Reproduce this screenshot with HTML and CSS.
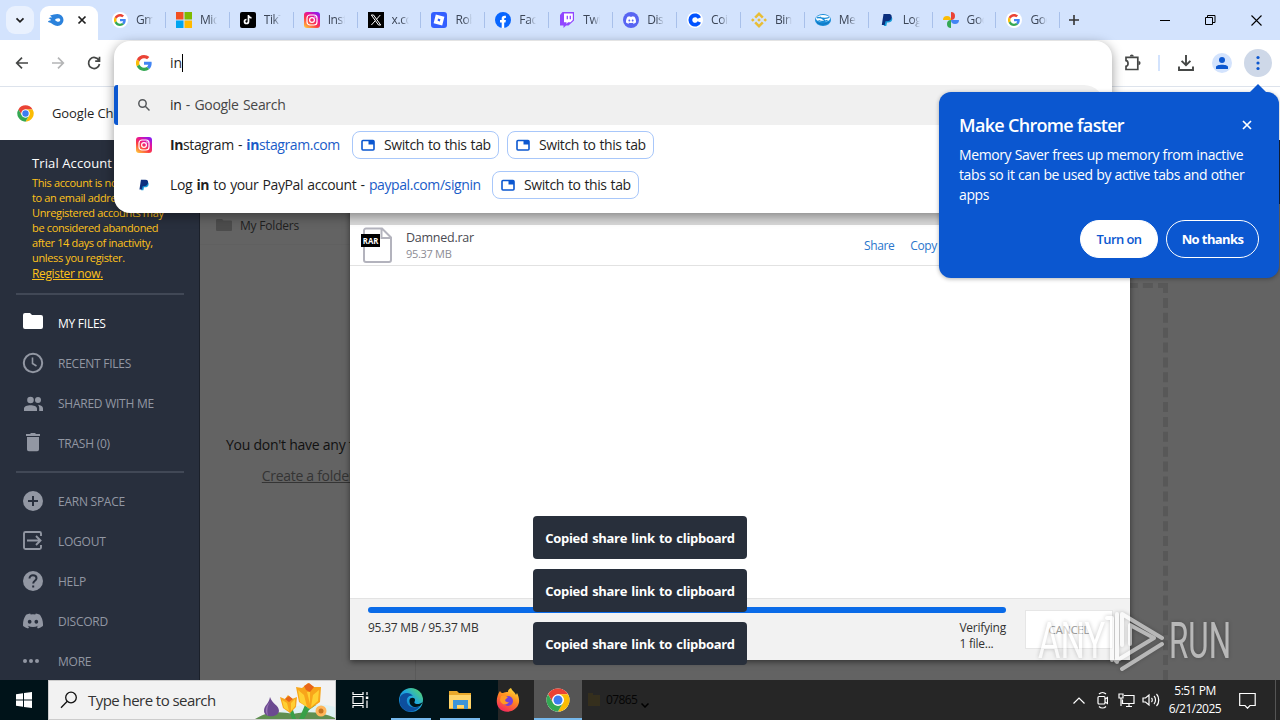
FILE: index.html
```
<!DOCTYPE html>
<html lang="en">
<head>
    <meta charset="UTF-8">
    <meta name="viewport" content="width=device-width, initial-scale=1.0">
    <title>My Files</title>
    <link rel="stylesheet" href="styles.css">
</head>
<body>
    <!-- shared icons -->
    <svg class="defs" width="0" height="0">
        <defs>
            <linearGradient id="igGrad" x1="0.1" y1="1" x2="0.8" y2="0">
                <stop offset="0" stop-color="#ffc83c"/>
                <stop offset="0.4" stop-color="#fb3a44"/>
                <stop offset="0.7" stop-color="#e311a0"/>
                <stop offset="1" stop-color="#8a1cf0"/>
            </linearGradient>
            <linearGradient id="edgeGrad" x1="0" y1="1" x2="1" y2="0">
                <stop offset="0" stop-color="#0b62b8"/>
                <stop offset="0.55" stop-color="#1ea7e0"/>
                <stop offset="1" stop-color="#62dc55"/>
            </linearGradient>
            <linearGradient id="foxGrad" x1="0.8" y1="0" x2="0.3" y2="1">
                <stop offset="0" stop-color="#ffe03a"/>
                <stop offset="0.45" stop-color="#ff8a1f"/>
                <stop offset="1" stop-color="#f5265e"/>
            </linearGradient>
        </defs>
        <symbol id="google" viewBox="0 0 48 48">
            <path fill="#ea4335" d="M24 9.500c3.500 0 6.700 1.200 9.200 3.600l6.900-6.900C35.900 2.400 30.500 0 24 0 14.600 0 6.500 5.400 2.600 13.200l8 6.200C12.400 13.700 17.700 9.500 24 9.500z"/>
            <path fill="#4285f4" d="M47 24.600c0-1.600-.2-3.100-.4-4.600H24v9h12.900c-.6 3-2.300 5.500-4.800 7.200l7.700 6C44.400 38 47 31.800 47 24.600z"/>
            <path fill="#fbbc05" d="M10.500 28.600a14.500 14.500 0 0 1 0-9.200l-8-6.200a24 24 0 0 0 0 21.600z"/>
            <path fill="#34a853" d="M24 48c6.500 0 11.900-2.100 15.900-5.800l-7.700-6c-2.200 1.400-4.900 2.300-8.200 2.300-6.300 0-11.600-4.200-13.500-9.900l-8 6.200C6.500 42.600 14.600 48 24 48z"/>
        </symbol>
        <symbol id="instagram" viewBox="0 0 16 16">
            <rect width="16" height="16" rx="3" fill="url(#igGrad)"/>
            <rect x="3" y="3" width="10" height="10" rx="3" fill="none" stroke="#fff" stroke-width="1.200"/>
            <circle cx="8" cy="8" r="2.400" fill="none" stroke="#fff" stroke-width="1.200"/>
            <circle cx="11" cy="5" r=".7" fill="#fff"/>
        </symbol>
        <symbol id="paypal" viewBox="0 0 16 16">
            <path fill="#179bd7" d="M5.500 5h7.300c1 1.500.7 5.500-3.600 5.500H8L7.300 14H4.800z"/>
            <path fill="#0b2f7e" d="M4.500 2h5c3 0 3.600 2 3 4-.6 2.300-2.300 3.300-4.500 3.300H6.500L5.700 13H2.800z"/>
        </symbol>
        <symbol id="chrome" viewBox="0 0 48 48">
            <circle cx="24" cy="24" r="23" fill="#fff"/>
            <path fill="#ea4335" d="M4.080 12.500A23 23 0 0 1 43.920 12.500H24A11.500 11.500 0 0 0 14 18.250z"/>
            <path fill="#ea4335" d="M4.080 12.500L14.040 29.750A11.500 11.500 0 0 1 24 12.500z"/>
            <path fill="#fbbc04" d="M43.920 12.500A23 23 0 0 1 24 47L33.960 29.750A11.500 11.500 0 0 0 24 12.500z"/>
            <path fill="#34a853" d="M24 47A23 23 0 0 1 4.080 12.500L14.040 29.750A11.500 11.500 0 0 0 33.960 29.750z"/>
            <circle cx="24" cy="24" r="11.500" fill="#fff"/>
            <circle cx="24" cy="24" r="9" fill="#3b7cf0"/>
        </symbol>
        <symbol id="switch" viewBox="0 0 14 12">
            <rect x="1" y="1.500" width="12" height="9.500" rx="1" fill="none" stroke="#0b57d0" stroke-width="1.600"/>
            <rect x="7.500" y="1.500" width="5.500" height="4" fill="#0b57d0"/>
        </symbol>
        <symbol id="discord" viewBox="0 0 24 24">
            <path fill="currentColor" fill-rule="evenodd" d="M20.300 4.400A19.800 19.800 0 0 0 15.400 2.900l-.7 1.300a18 18 0 0 0-5.500 0L8.600 2.900a19.700 19.700 0 0 0-4.900 1.500C.5 9-.3 13.600.1 18.100a20 20 0 0 0 6 3l1.300-2-1.900-1 .4-.3a14.300 14.300 0 0 0 12.200 0l.4.300-1.900.9 1.300 2.100a20 20 0 0 0 6-3c.5-5.200-.8-9.700-3.600-13.700zM8 15.300c-1.200 0-2.200-1-2.200-2.400s1-2.400 2.200-2.400 2.200 1 2.200 2.400-1 2.400-2.200 2.400zm8 0c-1.200 0-2.200-1-2.200-2.400s1-2.400 2.200-2.400 2.200 1 2.200 2.400-1 2.400-2.200 2.400z"/>
        </symbol>
    </svg>

    <div class="tabs">
        <button class="tab-search"><svg width="12" height="12" viewBox="0 0 12 12"><path d="M2.500 4.300L6 7.800l3.500-3.500" fill="none" stroke="#1f1f1f" stroke-width="1.700"/></svg></button>
        <div class="active-tab">
            <svg width="16" height="12" viewBox="0 0 16 12"><path fill="#2b82dc" fill-rule="evenodd" d="M2 1.500C5 1 6.500 0 9.500 0a6 6 0 0 1 0 12C6 12 4.500 9 0 8c0-1.200 1.500-1.500 3-1.700C2.700 5 1.500 4.500.5 4.200 2 3.500 3 3.500 4 3.300zM10.500 4.200C8.500 4.200 7.500 5 7 6c1 1.200 2 1.800 3.500 1.800a1.800 1.800 0 0 0 0-3.600z"/></svg>
            <svg width="10" height="10" viewBox="0 0 10 10"><path d="M1.500 1.500l7 7m0-7l-7 7" stroke="#1f1f1f" stroke-width="1.700"/></svg>
        </div>
        <div class="tab"><span class="disc"><svg width="12" height="12"><use href="#google"/></svg></span><span class="title">Gmail</span></div>
        <div class="tab"><svg width="16" height="16" viewBox="0 0 16 16"><path fill="#f25022" d="M0 0h7.500v7.500H0z"/><path fill="#7fba00" d="M8.500 0H16v7.500H8.500z"/><path fill="#00a4ef" d="M0 8.500h7.500V16H0z"/><path fill="#ffb900" d="M8.500 8.500H16V16H8.500z"/></svg><span class="title">Microsoft</span></div>
        <div class="tab"><svg width="16" height="16" viewBox="0 0 16 16"><rect width="16" height="16" rx="2"/><path d="M8.500 3v6.500a2 2 0 1 1-2-2M8.500 3c.2 1.700 1.300 2.700 3 2.800" fill="none" stroke="#fff" stroke-width="1.700"/></svg><span class="title">TikTok</span></div>
        <div class="tab"><svg width="16" height="16"><use href="#instagram"/></svg><span class="title">Instagram</span></div>
        <div class="tab"><svg width="16" height="16" viewBox="0 0 16 16"><rect width="16" height="16"/><path d="M3.300 3h2.200l7.200 10h-2.200zM12.300 3l-4 4.500M7.200 8.800L3.400 13" fill="none" stroke="#fff"/></svg><span class="title">x.com</span></div>
        <div class="tab"><svg width="16" height="16" viewBox="0 0 16 16"><rect width="16" height="16" rx="3" fill="#335fff"/><path fill="#fff" fill-rule="evenodd" d="M4.800 2.600l8.600 2.200-2.200 8.600-8.600-2.200zM7 6.600l-.4 2.200 2.200.6.600-2.200z"/></svg><span class="title">Roblox</span></div>
        <div class="tab"><svg width="16" height="16" viewBox="0 0 16 16"><circle cx="8" cy="8" r="8" fill="#0866ff"/><path fill="#fff" d="M6.700 16v-5.500H5V8h1.700V6.500c0-2.300 1.400-3.200 4.200-2.700v2.100C9.400 5.800 9.200 6.200 9.200 7v1h1.700l-.4 2.500H9.200V16z"/></svg><span class="title">Facebook</span></div>
        <div class="tab"><svg width="16" height="16" viewBox="0 0 16 16"><path fill="#9146ff" d="M3.500 0L1 3v10.500h3.500V16L7 13.500h2.500L15 8.500V0z"/><path fill="#fff" d="M5 1.500h8.800V8l-2.300 2.300H9L7.500 12v-1.700H5z"/><path d="M8.300 3.700v3.600M11.300 3.700v3.600" stroke="#9146ff" stroke-width="1.300"/></svg><span class="title">Twitch</span></div>
        <div class="tab"><span class="disc discord-disc"><svg width="10" height="10"><use href="#discord"/></svg></span><span class="title">Discord</span></div>
        <div class="tab"><svg width="16" height="16" viewBox="0 0 16 16"><circle cx="8" cy="8" r="8" fill="#fff"/><path d="M12.300 6A4.700 4.700 0 1 0 12.300 10" fill="none" stroke="#0052ff" stroke-width="3.800"/></svg><span class="title">Coinbase</span></div>
        <div class="tab"><svg width="16" height="16" viewBox="0 0 16 16" fill="#e8bd35"><path d="M8 0l4.700 4.700-1.800 1.800L8 3.600 5.100 6.500 3.300 4.700zM8 16l4.700-4.700-1.800-1.800L8 12.400 5.100 9.500l-1.800 1.800zM1.800 6.200L3.600 8 1.800 9.800 0 8zM14.200 6.200L16 8l-1.800 1.800L12.400 8zM8 6.200L9.800 8 8 9.800 6.200 8z"/></svg><span class="title">Binance</span></div>
        <div class="tab"><svg width="16" height="16" viewBox="0 0 16 16"><ellipse cx="8" cy="8" rx="8" ry="6" fill="#168bd8"/><ellipse cx="8" cy="6.500" rx="7" ry="3.600" fill="#fff"/><path d="M2 6c3-2 5 2.200 12-.5M3.500 8.500c3 1.200 6 1.700 9-.2M5 5l5 3.500" fill="none" stroke="#168bd8" stroke-width="1.300"/><path d="M2 10.500c4 2.500 8 2 12-.5" fill="none" stroke="#0d6cb5" stroke-width=".8"/></svg><span class="title">Mercado</span></div>
        <div class="tab"><svg width="16" height="16"><use href="#paypal"/></svg><span class="title">Log in</span></div>
        <div class="tab"><svg width="16" height="16" viewBox="0 0 16 16"><path fill="#ea4335" d="M8 0a4 4 0 0 1 0 8z"/><path fill="#4285f4" d="M16 8a4 4 0 0 1-8 0z"/><path fill="#34a853" d="M8 16a4 4 0 0 1 0-8z"/><path fill="#fbbc04" d="M0 8a4 4 0 0 1 8 0z"/></svg><span class="title">Google Photos</span></div>
        <div class="tab"><span class="disc"><svg width="12" height="12"><use href="#google"/></svg></span><span class="title">Google</span></div>
        <svg class="new-tab" width="12" height="12" viewBox="0 0 12 12"><path d="M6 1v10M1 6h10" stroke="#333" stroke-width="1.600"/></svg>
        <div class="window-buttons">
            <svg width="10" height="10" viewBox="0 0 10 10"><path d="M0 5.500h10" stroke="#000"/></svg>
            <svg width="11" height="11" viewBox="0 0 11 11" fill="none" stroke="#000"><path d="M.5 2.500h7v7h-7zM2.500 2.500v-2h7.500v7H7.500"/></svg>
            <svg width="11" height="11" viewBox="0 0 11 11"><path d="M.5.500l10 10m0-10l-10 10" stroke="#000" stroke-width="1.100"/></svg>
        </div>
    </div>

    <div class="toolbar">
        <div class="nav">
            <svg width="16" height="16" viewBox="0 0 16 16" fill="none" stroke="#454746" stroke-width="1.700"><path d="M14 8H3M8 2.700L2.700 8 8 13.300"/></svg>
            <svg width="16" height="16" viewBox="0 0 16 16" fill="none" stroke="#b4b5b6" stroke-width="1.700"><path d="M2 8h11M8 2.700L13.300 8 8 13.300"/></svg>
            <svg width="16" height="16" viewBox="0 0 16 16" fill="none" stroke="#454746" stroke-width="1.700"><path d="M13 5.500A5.500 5.500 0 1 0 13.500 9M13.500 1.800v4.400H9.200"/></svg>
        </div>
        <div class="actions">
            <svg width="18" height="18" viewBox="0 0 18 18" fill="none" stroke="#454746" stroke-width="1.700"><path d="M3 3.300h11.800v12.200H3v-3.200c2.700-.3 2.700-5.400 0-5.700z"/><path fill="#454746" stroke="none" d="M6.800 2.600a2 2 0 0 1 4 0zM15.500 7a2 2 0 0 1 0 4.200z"/></svg>
            <span class="separator"></span>
            <svg width="18" height="18" viewBox="0 0 18 18" fill="none" stroke="#454746" stroke-width="1.900"><path d="M9 1v10M4.600 6.800L9 11.200l4.400-4.400M2 12.500V16h14v-3.500"/></svg>
            <span class="avatar"><svg width="14" height="14" viewBox="0 0 14 14" fill="#0b57d0"><circle cx="7" cy="4" r="3"/><path d="M1 13v-2c0-3 12-3 12 0v2z"/></svg></span>
            <span class="kebab"><svg width="4" height="16" viewBox="0 0 4 16" fill="#0b57d0"><circle cx="2" cy="2.500" r="1.600"/><circle cx="2" cy="8" r="1.600"/><circle cx="2" cy="13.500" r="1.600"/></svg></span>
        </div>
    </div>

    <div class="infobar">
        <svg width="17" height="17"><use href="#chrome"/></svg>
        <span>Google Chrome</span>
    </div>

    <div class="page">
        <div class="sidebar">
            <div class="account">
                <h3>Trial Account</h3>
                <p>This account is not linked<br>to an email address.<br>Unregistered accounts may<br>be considered abandoned<br>after 14 days of inactivity,<br>unless you register.</p>
                <a>Register now.</a>
            </div>
            <ul class="menu">
                <li class="selected"><svg width="22" height="22" viewBox="0 0 22 22"><path d="M3 1h5l2 2h9a2 2 0 0 1 2 2v10a2 2 0 0 1-2 2H3a2 2 0 0 1-2-2V3a2 2 0 0 1 2-2z"/></svg>MY FILES</li>
                <li><svg width="22" height="22" viewBox="0 0 22 22"><g fill="none" stroke="currentColor" stroke-width="2"><circle cx="11" cy="11" r="9.200"/><path d="M10.500 5.500v6l4 2.500" stroke-width="1.600"/></g></svg>RECENT FILES</li>
                <li><svg width="22" height="22" viewBox="0 0 22 22"><circle cx="8.500" cy="8" r="3.300"/><circle cx="16" cy="8" r="3"/><path d="M2 19v-2.500c0-4.500 13-4.500 13 0V19zM16 12.700c3 .3 5 1.500 5 3.800V19h-3.800v-3c0-1.400-.5-2.400-1.200-3.300z"/></svg>SHARED WITH ME</li>
                <li><svg width="22" height="22" viewBox="0 0 22 22"><path d="M4 2h4l1-1h4l1 1h4v2H4zM5 5h12v12.500a1.800 1.800 0 0 1-1.800 1.800H6.800A1.800 1.800 0 0 1 5 17.500z"/></svg>TRASH (0)</li>
            </ul>
            <ul class="menu more">
                <li><svg width="22" height="22" viewBox="0 0 22 22"><circle cx="11" cy="11" r="10"/><path d="M11 6v10M6 11h10" stroke="#282f3d" stroke-width="2"/></svg>EARN SPACE</li>
                <li><svg width="22" height="22" viewBox="0 0 22 22"><g fill="none" stroke="currentColor" stroke-width="1.900"><path d="M19 6V3.500A1.500 1.500 0 0 0 17.500 2h-14A1.500 1.500 0 0 0 2 3.500v14A1.500 1.500 0 0 0 3.500 19h14a1.500 1.500 0 0 0 1.500-1.500V15M5 10.500h13M14 6l4.500 4.500L14 15"/></g></svg>LOGOUT</li>
                <li><svg width="22" height="22" viewBox="0 0 22 22"><circle cx="11" cy="11" r="10"/><path d="M7.500 8.500c0-4.500 7-4 7-.3 0 2.600-3.300 2.600-3.300 5.300M11.200 15.500v2" fill="none" stroke="#282f3d" stroke-width="2"/></svg>HELP</li>
                <li><svg width="20" height="20" class="discord"><use href="#discord"/></svg>DISCORD</li>
                <li><svg width="22" height="22" viewBox="0 0 22 22"><circle cx="3" cy="11" r="2"/><circle cx="9" cy="11" r="2"/><circle cx="15" cy="11" r="2"/></svg>MORE</li>
            </ul>
        </div>
        <div class="folders">
            <div class="folder-row"><svg width="16" height="12" viewBox="0 0 16 12"><path fill="#4c4c4c" d="M1 0h5l1.500 1.500H15a1 1 0 0 1 1 1V11a1 1 0 0 1-1 1H1a1 1 0 0 1-1-1V1a1 1 0 0 1 1-1z"/></svg>My Folders</div>
            <div class="empty">You don't have any folders.<a>Create a folder</a></div>
        </div>
        <div class="drop-area"></div>
        <div class="page-head"></div>

        <div class="modal">
            <div class="modal-head"></div>
            <div class="file">
                <svg width="34" height="38" viewBox="0 0 34 38"><path d="M3 4.500a2 2 0 0 1 2-2h16l9 9V34a2 2 0 0 1-2 2H5a2 2 0 0 1-2-2zM20.500 3v9h9" fill="#fff" stroke="#b3b3bd" stroke-width="2"/><rect y="8" width="19" height="13"/><text x="1.800" y="18" textLength="15.500" lengthAdjust="spacingAndGlyphs">RAR</text></svg>
                <div class="file-name">Damned.rar<small>95.37 MB</small></div>
                <a>Share</a>
                <a>Copy link</a>
            </div>
            <div class="modal-body"></div>
            <div class="modal-foot">
                <div class="upload">
                    <div class="bar"></div>
                    <div class="status"><span>95.37 MB / 95.37 MB</span><span>Verifying<br>1 file...</span></div>
                </div>
                <button class="cancel">CANCEL</button>
            </div>
        </div>
    </div>

    <div class="toasts">
        <div class="toast">Copied share link to clipboard</div>
        <div class="toast">Copied share link to clipboard</div>
        <div class="toast">Copied share link to clipboard</div>
    </div>

    <!-- address bar with suggestions -->
    <div class="omnibox">
        <div class="row input"><svg width="16" height="16"><use href="#google"/></svg><span class="typed">in</span><i class="caret"></i></div>
        <div class="row current"><svg width="16" height="16" viewBox="0 0 16 16" fill="none" stroke="#55585b" stroke-width="1.500"><circle cx="6.500" cy="6.500" r="3.700"/><path d="M9.300 9.300L13.500 13.500"/></svg><span class="text">in <em>- Google Search</em></span></div>
        <div class="row"><svg width="16" height="16"><use href="#instagram"/></svg><span class="text s-insta"><b>In</b>stagram - <a><b>in</b>stagram.com</a></span>
            <span class="switch"><svg width="14" height="12"><use href="#switch"/></svg><span>Switch to this tab</span></span>
            <span class="switch"><svg width="14" height="12"><use href="#switch"/></svg><span>Switch to this tab</span></span>
        </div>
        <div class="row"><svg width="14" height="14" class="pp"><use href="#paypal"/></svg><span class="text s-paypal">Log <b>in</b> to your PayPal account - <a>paypal.com/signin</a></span>
            <span class="switch"><svg width="14" height="12"><use href="#switch"/></svg><span>Switch to this tab</span></span>
        </div>
    </div>

    <div class="promo">
        <div class="promo-title">Make Chrome faster<svg width="10" height="10" viewBox="0 0 10 10"><path d="M1 1l8 8m0-8L1 9" stroke="#fff" stroke-width="1.700"/></svg></div>
        <p>Memory Saver frees up memory from inactive<br>tabs so it can be used by active tabs and other<br>apps</p>
        <div class="promo-buttons"><button class="primary">Turn on</button><button>No thanks</button></div>
    </div>

    <svg class="watermark" width="200" height="66" viewBox="0 0 200 66">
        <text x="5" y="50" textLength="67" lengthAdjust="spacingAndGlyphs">ANY</text>
        <g fill="none" stroke="#fff" stroke-width="4" stroke-linejoin="round" stroke-linecap="round"><path d="M74 10h5v42M84 54V6M89 37V6l40 24M97 36V17l24 13-38 23M89 61l40-25"/></g>
        <text x="136" y="50" textLength="62" lengthAdjust="spacingAndGlyphs">RUN</text>
    </svg>

    <div class="taskbar">
        <div class="start"><svg width="16" height="16" viewBox="0 0 16 16" fill="#fff"><path d="M0 2.300l7-1v6.300H0zM8 1.100L16 0v7.600H8zM0 8.400h7v6.300l-7-1zM8 8.400h8V16l-8-1.100z"/></svg></div>
        <div class="search">
            <svg width="18" height="18" viewBox="0 0 18 18" fill="none" stroke="#111" stroke-width="1.300"><circle cx="11" cy="6.500" r="5.300"/><path d="M7.300 10.300L1 16.700"/></svg>
            <span>Type here to search</span>
            <svg class="flowers" width="80" height="38" viewBox="0 0 80 38">
                <path fill="#dff1f3" d="M22 34c8-10 40-14 58-8v12H22z"/>
                <path fill="#5f8f50" d="M0 38c12-8 25-8 38-5 14-3 30-2 42 4v1z"/>
                <path fill="#38a048" d="M34 28l3 10h4l-4-12zM50 24l-6 14h5l5-9 7-5-6-1-2 5-1-5z"/>
                <path fill="#6c4a91" d="M15 16c-1 7-6 8-6 14 0 7 14 7 15 0 0-6-7-7-9-14z"/>
                <path fill="#9875b5" d="M15 21c-3 5-3 9-2 14-4-5-2-10 2-14z"/>
                <path fill="#f7a51c" d="M25 16l5 2 3-4 4 4 5-2-1 10-6 6-7-5z"/>
                <path fill="#ffcf33" d="M27 19l5 3 2 8-5-3zM40 18l-4 4v8l4-5z"/>
                <path fill="#f8a51a" d="M41 6l6 1 6-5 6 4 7 0-1 15-10 7-11-7z"/>
                <path fill="#ffd032" d="M43 9l6 5 3 12-7-5zM64 9l-6 5-2 12 7-6zM52 11l3 0 0 12z"/>
                <path fill="#e86519" d="M49 5l5-3 5 4-4 5-4-2zM30 18l4-3 4 3-4 3z"/>
                <circle cx="66" cy="30" r="5.500" fill="#ffb65b"/><circle cx="66" cy="30" r="2.500" fill="#c57420"/>
            </svg>
        </div>
        <div class="app"><svg width="18" height="18" viewBox="0 0 18 18" fill="none" stroke="#fff" stroke-width="1.200"><path d="M1 1v2.500h10V1M1 17v-2.500h10V17M1 5.500h10v7H1zM15 1v3M15 9.500V17"/><path fill="#fff" stroke="none" d="M13.800 5.500h2.500V8h-2.500z"/></svg></div>
        <div class="app open edge"><svg width="24" height="24" viewBox="0 0 24 24"><circle cx="12" cy="12" r="12" fill="url(#edgeGrad)"/><path fill="#0d4f9e" d="M1 9c3-5 10-5 13-1-4-1-7 2-6 6 1 5 7 7 13 4-4 7-16 8-20-2z"/><path fill="#001319" d="M10.500 12c.5-3 5.500-3 5.500 0 0 1.500-1 2-.5 3 1.500 2 6 1 8.500-1l-3 4c-7 3-11-1-10.500-6z"/></svg></div>
        <div class="app open files"><svg width="22" height="20" viewBox="0 0 22 20"><path fill="#e9a92b" d="M0 1h8l2 2h12v16H0z"/><path fill="#ffd56b" d="M0 5h22v13H0z"/><path fill="#3c94d8" d="M4 10h15v9h-4v-4H8v4H4z"/></svg></div>
        <div class="app firefox"><svg width="24" height="24" viewBox="0 0 24 24"><path fill="url(#foxGrad)" d="M4 3c1 2 2 2 3 2 2-1 3-1 5-1 0-2 1-3 3-4 1 3 4 4 5 7l1-2c3 6 3 11-1 15-5 5-13 5-17 0C-1 15 1 7 4 3z"/><circle cx="12" cy="13" r="5" fill="#7540d9"/><path fill="#ff9a24" d="M5 8c3-1 5 0 7 1l-2 2c-2 1 0 4 3 3-2 4-8 3-9-2z"/></svg></div>
        <div class="app open current"><svg width="24" height="24"><use href="#chrome"/></svg></div>
        <div class="ghost"><svg width="12" height="14" viewBox="0 0 12 14"><path fill="#352f1d" d="M0 1h5v2h7v11H0z"/></svg><span>07865</span><svg class="chev" width="8" height="5" viewBox="0 0 8 5"><path d="M.5.500L4 4 7.500.500" fill="none" stroke="#000" stroke-width="1.500"/></svg></div>
        <div class="tray">
            <svg width="14" height="9" viewBox="0 0 14 9"><path d="M1.500 7.500L7 2l5.500 5.500"/></svg>
            <svg width="12" height="18" viewBox="0 0 12 18"><rect x="2" y="5.500" width="7" height="7.500" rx="1"/><path d="M9 8l2.500-1.500v6L9 11M3 3c2-2 5-2 7 0M3 15.500c2 2 5 2 7 0"/></svg>
            <svg width="17" height="16" viewBox="0 0 17 16"><path d="M6 3.500h10v8H4.500V7.500M1 2h4v4H1zM3 6v8M8 14.500h6M11 11.500v3"/></svg>
            <svg class="volume" width="18" height="16" viewBox="0 0 18 16"><path d="M1 6v4h2.500L7 13V3L3.500 6zM9.500 6c1 1 1 3 0 4M12 4c2 2 2 6 0 8M14.500 2c3 3 3 9 0 12"/></svg>
            <div class="clock">5:51 PM<br>6/21/2025</div>
            <svg class="notify" width="17" height="17" viewBox="0 0 17 17"><path d="M.7 1.500h15.500v12H11l-2.500 2.700L6 13.500H.7z"/></svg>
        </div>
    </div>
</body>
</html>
```
FILE: styles.css
```
* {
    box-sizing: border-box;
}
body {
    margin: 0;
    width: 1280px;
    height: 720px;
    overflow: hidden;
    position: relative;
    display: flex;
    flex-direction: column;
    font-family: "Open Sans", "Noto Sans", sans-serif;
    font-size: 13px;
    color: #1f1f1f;
    background: #fff;
    white-space: nowrap;
}
svg {
    flex: none;
    display: block;
}
button {
    font-family: inherit;
    padding: 0;
    border: none;
}
ul, p, h3 {
    margin: 0;
    padding: 0;
    list-style: none;
}
.defs {
    position: absolute;
}

/* tab strip */
.tabs {
    flex: none;
    height: 40px;
    display: flex;
    align-items: center;
    background: #d3e3fd;
}
.tab-search {
    width: 28px;
    height: 28px;
    margin: 0 6px;
    border-radius: 9px;
    background: #e9f1fe;
    display: flex;
    align-items: center;
    justify-content: center;
}
.active-tab {
    width: 58px;
    height: 34px;
    align-self: flex-end;
    margin-right: 14px;
    padding: 0 11px 6px 8px;
    border-radius: 9px 9px 0 0;
    background: #fff;
    display: flex;
    align-items: center;
    justify-content: space-between;
}
.tab {
    flex: none;
    width: 63.9px;
    height: 16px;
    display: flex;
    align-items: center;
    gap: 8px;
}
.tab::after {
    content: "";
    width: 1px;
    height: 16px;
    margin-left: auto;
    margin-right: 10px;
    background: #a8c0ea;
}
.title {
    width: 17px;
    margin-right: -8px;
    overflow: hidden;
    font-size: 12px;
    line-height: 18px;
    letter-spacing: -0.4px;
    color: #3c4657;
    -webkit-mask-image: linear-gradient(90deg, #000 55%, transparent);
    mask-image: linear-gradient(90deg, #000 55%, transparent);
}
.disc {
    width: 16px;
    height: 16px;
    border-radius: 50%;
    background: #fff;
    display: flex;
    align-items: center;
    justify-content: center;
}
.discord-disc {
    background: #5865f2;
    color: #fff;
}
.new-tab {
    margin-left: -2px;
}
.window-buttons {
    display: flex;
    align-items: center;
    gap: 35px;
    margin-left: auto;
    margin-right: 18px;
}

/* toolbar */
.toolbar {
    flex: none;
    height: 47px;
    padding: 0 8px 0 14px;
    display: flex;
    align-items: center;
    justify-content: space-between;
    background: #fff;
    border-bottom: 1px solid #dde3ec;
}
.nav {
    display: flex;
    gap: 20px;
}
.actions {
    display: flex;
    align-items: center;
}
.separator {
    width: 2px;
    height: 16px;
    margin: 0 17px;
    background: #d3e3fd;
}
.avatar {
    width: 20px;
    height: 20px;
    margin: 0 12px 0 17px;
    border-radius: 50%;
    background: #d3e3fd;
    display: flex;
    align-items: center;
    justify-content: center;
}
.kebab {
    width: 28px;
    height: 28px;
    border-radius: 50%;
    background: #ced8e8;
    display: flex;
    align-items: center;
    justify-content: center;
}
.infobar {
    flex: none;
    height: 53px;
    padding-left: 17px;
    display: flex;
    align-items: center;
    gap: 18px;
    letter-spacing: -0.1px;
}
.infobar span {
    padding-bottom: 1px;
}

/* page */
.page {
    flex: none;
    height: 540px;
    display: flex;
    position: relative;
    background: #636363;
}
.sidebar {
    width: 200px;
    padding: 14px 15px 0 16px;
    background: #282f3d;
    border-right: 1px solid #1b202a;
}
.account {
    padding: 0 0 11px 16px;
    border-bottom: 2px solid #414856;
    color: #ffc21a;
}
.account h3 {
    margin-bottom: 3px;
    font-size: 13px;
    font-weight: normal;
    line-height: 18px;
    letter-spacing: 0.1px;
    color: #fff;
}
.account p {
    font-size: 11px;
    line-height: 15px;
    letter-spacing: -0.35px;
}
.account a {
    display: block;
    margin-top: 1px;
    font-size: 12px;
    line-height: 16px;
    letter-spacing: -0.35px;
    text-decoration: underline;
}
.menu {
    padding: 8px 0;
    font-size: 12px;
    color: #9297a3;
    letter-spacing: -0.25px;
}
.menu li {
    height: 40px;
    padding-left: 6px;
    display: flex;
    align-items: center;
    gap: 14px;
}
.menu svg {
    fill: currentColor;
}
.menu .discord {
    margin-right: 1px;
    margin-left: 1px;
}
.menu .selected {
    color: #fff;
}
.more {
    border-top: 2px solid #414856;
}
.folders {
    width: 216px;
    border-right: 1px solid #5a5a5a;
}
.folder-row {
    height: 105px;
    padding: 66px 0 0 16px;
    border-bottom: 1px solid #606060;
    display: flex;
    align-items: center;
    gap: 8px;
    font-size: 12px;
    letter-spacing: -0.2px;
}
.empty {
    margin-top: 190px;
    padding-left: 7px;
    text-align: center;
    font-size: 14px;
    line-height: 20px;
    letter-spacing: -0.25px;
    color: #111;
}
.empty a {
    display: block;
    margin-top: 11px;
    margin-left: -6px;
    letter-spacing: -0.3px;
    color: #343434;
    text-decoration: underline;
}
.drop-area {
    width: 752px;
    margin-top: 143px;
    border: 5px dashed #585858;
    border-width: 5px 5px 0 0;
}
.page-head {
    width: 20px;
    height: 64px;
    margin-left: auto;
    background: #12203a;
}
.modal {
    position: absolute;
    left: 350px;
    top: 40px;
    width: 780px;
    height: 480px;
    display: flex;
    flex-direction: column;
    background: #fff;
    box-shadow: 0 2px 6px rgba(0, 0, 0, 0.5);
}
.modal-head {
    height: 45px;
    background: #d8d8d8;
}
.file {
    height: 41px;
    padding: 0 0 0 11px;
    display: flex;
    align-items: center;
    border-bottom: 1px solid #e2e2e2;
}
.file text {
    font-size: 9px;
    font-weight: bold;
    fill: #fff;
}
.file-name {
    width: 458px;
    margin-left: 11px;
    padding-top: 2px;
    font-size: 12.5px;
    line-height: 16px;
    letter-spacing: -0.25px;
    color: #4a4a52;
}
.file-name small {
    display: block;
    font-size: 11px;
    letter-spacing: -0.3px;
    color: #8c8c94;
}
.file a {
    margin-right: 16px;
    font-size: 12px;
    letter-spacing: -0.4px;
    color: #2a76cc;
}
.modal-body {
    flex: 1;
}
.modal-foot {
    height: 62px;
    padding: 8px 17px 0 18px;
    display: flex;
    justify-content: space-between;
    background: #f2f2f2;
    border-top: 1px solid #e3e3e3;
}
.upload {
    width: 638px;
}
.bar {
    height: 6px;
    border-radius: 3px;
    background: #0a6be8;
}
.status {
    margin-top: 7px;
    display: flex;
    justify-content: space-between;
    font-size: 12px;
    line-height: 16px;
    letter-spacing: -0.25px;
    color: #333;
}
.cancel {
    width: 88px;
    height: 39px;
    margin-top: 3px;
    background: #fff;
    border: 1px solid #e6e6e6;
    color: #999;
    font-size: 11px;
    letter-spacing: -0.1px;
}

/* toasts */
.toasts {
    position: absolute;
    left: 533px;
    top: 516px;
    width: 214px;
    display: flex;
    flex-direction: column;
    gap: 10px;
}
.toast {
    height: 43px;
    border-radius: 4px;
    background: #282f3b;
    color: #fff;
    font-size: 13px;
    font-weight: 700;
    line-height: 44px;
    text-align: center;
    letter-spacing: -0.3px;
    word-spacing: 1.2px;
}

/* address bar popup */
.omnibox {
    position: absolute;
    left: 114px;
    top: 41px;
    width: 998px;
    height: 172px;
    border-radius: 16px;
    background: #fff;
    box-shadow: 0 3px 12px rgba(0, 0, 0, 0.4);
    font-size: 14px;
}
.row {
    height: 40px;
    padding-left: 22px;
    display: flex;
    align-items: center;
}
.row > svg {
    margin-right: 18px;
}
.row .pp {
    margin: 0 19px 0 1px;
}
.row a {
    color: #1a5cc8;
}
.row em {
    font-style: normal;
    color: #474747;
}
.input {
    height: 44px;
}
.typed, .text, .switch span {
    padding-bottom: 2px;
}
.caret {
    width: 1px;
    height: 18px;
    background: #000;
}
.row.current {
    margin-right: 8px;
    padding-left: 18px;
    border-left: 4px solid #0b57d0;
    border-radius: 3px 20px 20px 3px;
    background: #f0f0f0;
}
.text {
    letter-spacing: -0.3px;
    word-spacing: 1px;
}
.s-insta {
    width: 182px;
    letter-spacing: -0.4px;
}
.s-paypal {
    width: 322px;
    letter-spacing: -0.4px;
}
.switch {
    width: 147px;
    height: 28px;
    margin-right: 8px;
    padding-left: 8px;
    border: 1px solid #a8c7fa;
    border-radius: 8px;
    display: flex;
    align-items: center;
    gap: 9px;
    letter-spacing: -0.4px;
    word-spacing: 0.7px;
}

/* memory saver bubble */
.promo {
    position: absolute;
    left: 939px;
    top: 92px;
    width: 340px;
    height: 186px;
    padding: 20px;
    border-radius: 12px;
    background: #0b57d0;
    color: #fff;
    box-shadow: 0 1px 4px rgba(0, 0, 0, 0.3);
}
.promo::before {
    content: "";
    position: absolute;
    right: 12px;
    top: -8px;
    border: 9px solid transparent;
    border-top: 0;
    border-bottom: 9px solid #0b57d0;
}
.promo-title {
    height: 26px;
    padding-right: 7px;
    padding-bottom: 1px;
    display: flex;
    align-items: center;
    justify-content: space-between;
    font-size: 18px;
    font-weight: 600;
    letter-spacing: -0.68px;
}
.promo p {
    margin-top: 7px;
    font-size: 14px;
    line-height: 20px;
    letter-spacing: -0.4px;
    word-spacing: 0.3px;
}
.promo-buttons {
    margin-top: 15px;
    display: flex;
    justify-content: flex-end;
    gap: 8px;
}
.promo-buttons button {
    width: 93px;
    height: 38px;
    border: 1px solid #fff;
    border-radius: 19px;
    background: none;
    color: #fff;
    font-size: 13px;
    font-weight: 700;
    letter-spacing: -0.6px;
}
.promo-buttons .primary {
    width: 78px;
    background: #fff;
    color: #0b57d0;
    font-weight: 600;
}

.watermark {
    position: absolute;
    left: 1033px;
    top: 608px;
    opacity: 0.55;
    fill: #fff;
    font-family: Roboto, sans-serif;
    font-size: 50px;
    filter: drop-shadow(0 0 2px rgba(0, 0, 0, 0.4));
}

/* taskbar */
.taskbar {
    flex: none;
    height: 40px;
    display: flex;
    background: linear-gradient(90deg, #001319 498px, #262626 498px);
    color: #fff;
}
.start {
    width: 48px;
    display: flex;
    align-items: center;
    justify-content: center;
}
.search {
    width: 288px;
    padding-left: 11px;
    display: flex;
    align-items: center;
    background: #f2f2f2;
    border: 1px solid #ccc;
    color: #333;
    font-size: 15px;
    letter-spacing: -0.55px;
}
.search span {
    margin-left: 10px;
}
.flowers {
    margin-left: auto;
}
.app {
    width: 49px;
    display: flex;
    align-items: center;
    justify-content: center;
}
.open {
    border-bottom: 2px solid #76b9ed;
    padding-top: 2px;
}
.edge, .files {
    width: 40px;
    margin: 0 3px 0 6px;
}
.firefox {
    width: 50px;
    margin-right: 1px;
}
.app.current {
    width: 48px;
    margin: 0;
    background: #555;
}
.ghost {
    display: flex;
    align-items: center;
    gap: 6px;
    padding: 0 0 2px 6px;
    font-size: 12px;
    letter-spacing: -0.6px;
    color: #050505;
}
.ghost .chev {
    margin: 12px 0 0 -2px;
}
.tray {
    width: 204px;
    margin-left: auto;
    margin-right: 4px;
    border-right: 1px solid #555;
    display: flex;
    align-items: center;
    gap: 10px;
}
.tray svg {
    fill: none;
    stroke: #fff;
    stroke-width: 1.2;
}
.tray .volume {
    margin-left: -3px;
}
.clock {
    width: 54px;
    margin-left: -2px;
    text-align: center;
    font-size: 12px;
    line-height: 18px;
    letter-spacing: -0.5px;
}
.tray .notify {
    margin-left: 7px;
}
```
